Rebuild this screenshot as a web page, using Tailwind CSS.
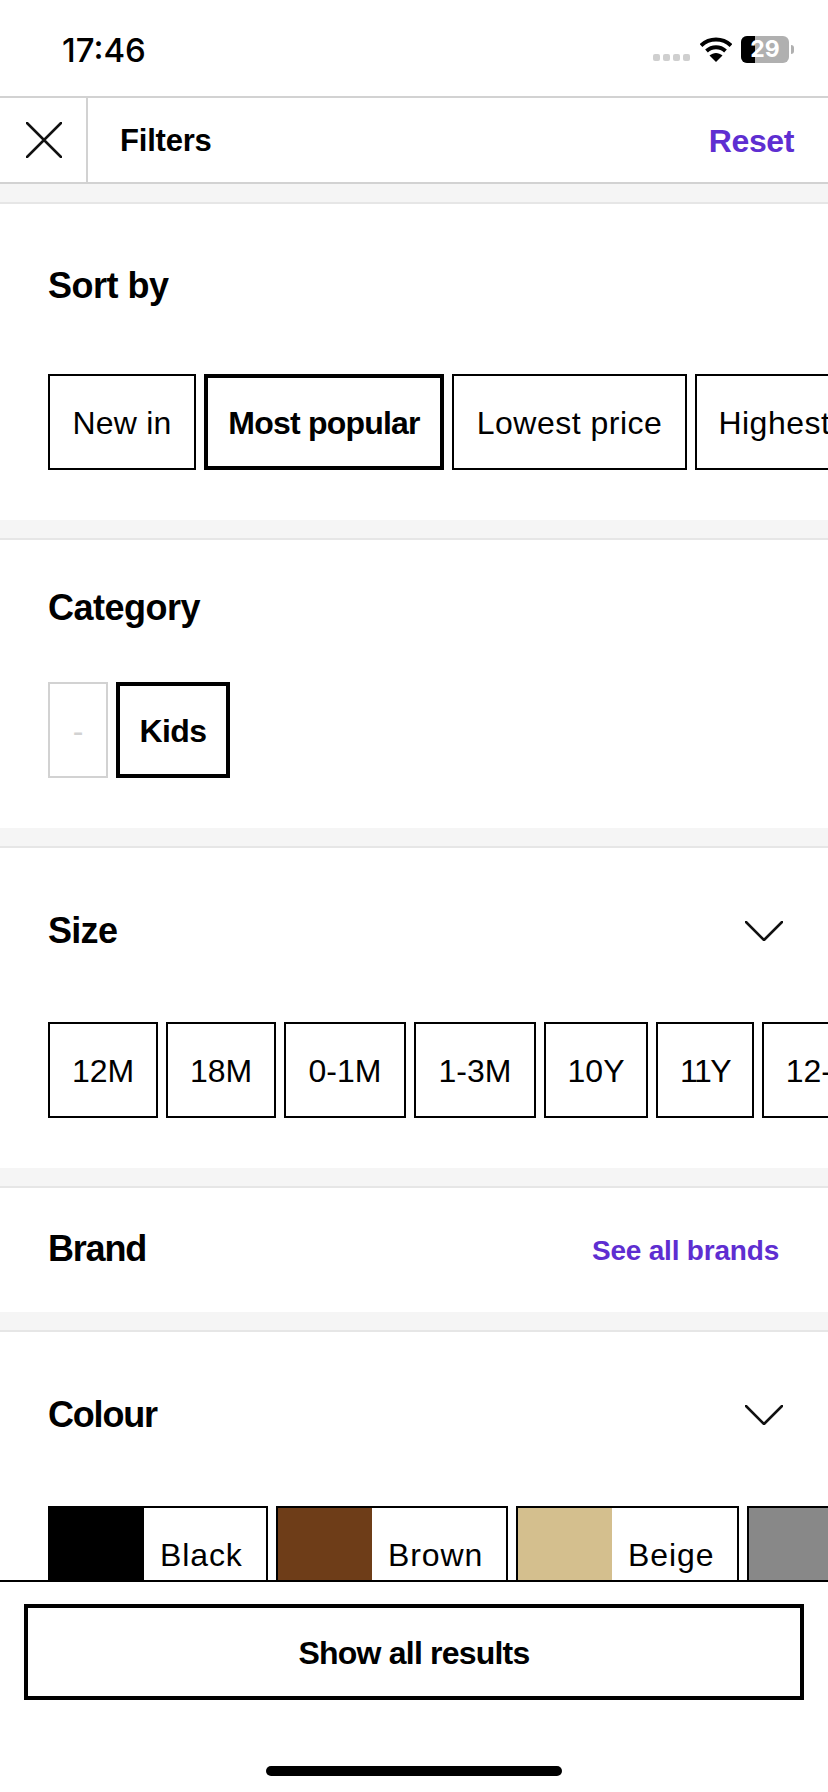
<!doctype html>
<html>
<head>
<meta charset="utf-8">
<script src="https://cdn.jsdelivr.net/npm/@tailwindcss/browser@4"></script>
</head>
<body class="bg-white">
<div class="w-[828px] h-[1792px] overflow-hidden flex flex-col font-['Liberation_Sans',sans-serif] text-black">
  <div class="h-[96px] shrink-0 flex items-start justify-between pl-[62px] pr-[34px]">
    <span class="mt-[30px] text-[33px] leading-[40px] font-medium font-['Inter',sans-serif]">17:46</span>
    <div class="flex items-start mt-[36px]">
      <div class="flex gap-[3px] mt-[18px]">
        <i class="block w-[7px] h-[7px] rounded-[2px] bg-[#cfcfcf]"></i>
        <i class="block w-[7px] h-[7px] rounded-[2px] bg-[#cfcfcf]"></i>
        <i class="block w-[7px] h-[7px] rounded-[2px] bg-[#cfcfcf]"></i>
        <i class="block w-[7px] h-[7px] rounded-[2px] bg-[#cfcfcf]"></i>
      </div>
      <svg class="ml-[10px] mt-[1px]" width="32" height="25" viewBox="0 0 32 25"><path d="M1 8.5C9.5 .5 22.5 .5 31 8.5" fill="none" stroke="#000" stroke-width="4"/><path d="M6.500 14C12 9 20 9 25.500 14" fill="none" stroke="#000" stroke-width="4"/><path d="M16 25l-6.500-6.500C13.500 15 18.500 15 22.500 18.500z" fill="#000"/></svg>
      <div class="ml-[9px] relative w-[48px] h-[27px] rounded-[6px] bg-[#b0b0b0] overflow-hidden flex items-center justify-center">
        <div class="absolute left-0 top-0 bottom-0 w-[14px] bg-black"></div>
        <span class="relative text-white font-bold text-[23px] leading-[27px] font-['Inter',sans-serif]">29</span>
      </div>
      <div class="mt-[9px] ml-[2px] w-[3px] h-[9px] rounded-r-[3px] bg-[#b0b0b0]"></div>
    </div>
  </div>

  <header class="h-[88px] shrink-0 flex items-stretch border-y-2 border-[#d2d2d2]">
    <div class="w-[88px] shrink-0 border-r-2 border-[#d2d2d2] flex items-center pl-[26px]">
      <svg width="36" height="36" viewBox="0 0 36 36"><path d="M1 1L35 35M35 1L1 35" stroke="#111" stroke-width="2.500" stroke-linecap="round"/></svg>
    </div>
    <div class="flex-1 flex items-center justify-between pl-[32px] pr-[34px]">
      <span class="text-[31px] font-bold tracking-[-0.2px] pt-[3px]">Filters</span>
      <span class="text-[32px] font-bold text-[#5e2ed1] tracking-[-0.4px] pt-[2px]">Reset</span>
    </div>
  </header>

  <main class="flex-1 min-h-0 overflow-hidden">
    <div class="h-[20px] bg-[#f5f5f5] border-b-2 border-[#e6e6e6]"></div>
    <section class="pt-[62px] pb-[50px]">
      <h2 class="pl-[48px] h-[40px] leading-[40px] text-[36px] font-bold tracking-[-0.5px]">Sort by</h2>
      <div class="mt-[68px] pl-[48px] flex gap-[8px] text-[32px]">
        <div class="shrink-0 w-[148px] h-[96px] pt-[2px] border-2 border-black flex items-center justify-center tracking-[0.2px]">New in</div>
        <div class="shrink-0 w-[240px] h-[96px] pt-[2px] border-4 border-black flex items-center justify-center font-bold tracking-[-0.8px]">Most popular</div>
        <div class="shrink-0 w-[235px] h-[96px] pt-[2px] border-2 border-black flex items-center justify-center tracking-[0.5px]">Lowest price</div>
        <div class="shrink-0 w-[240px] h-[96px] pt-[2px] border-2 border-black flex items-center justify-center tracking-[0.5px]">Highest price</div>
      </div>
    </section>

    <div class="h-[20px] bg-[#f5f5f5] border-b-2 border-[#e6e6e6]"></div>
    <section class="pt-[48px] pb-[50px]">
      <h2 class="pl-[48px] h-[40px] leading-[40px] text-[36px] font-bold tracking-[-0.5px]">Category</h2>
      <div class="mt-[54px] pl-[48px] flex gap-[8px] text-[32px]">
        <div class="shrink-0 w-[60px] h-[96px] pt-[2px] border-2 border-[#d2d2d2] text-[#d2d2d2] flex items-center justify-center">-</div>
        <div class="shrink-0 w-[114px] h-[96px] pt-[2px] border-4 border-black flex items-center justify-center font-bold tracking-[-0.6px]">Kids</div>
      </div>
    </section>

    <div class="h-[20px] bg-[#f5f5f5] border-b-2 border-[#e6e6e6]"></div>
    <section class="pt-[62px] pb-[50px]">
      <div class="pl-[48px] pr-[45px] h-[40px] flex items-center justify-between">
        <h2 class="text-[36px] font-bold tracking-[-0.7px] pt-[2px]">Size</h2>
        <svg class="mt-[2px]" width="38" height="20" viewBox="0 0 38 20"><path d="M1 1L19 19L37 1" fill="none" stroke="#111" stroke-width="2.500" stroke-linecap="round" stroke-linejoin="round"/></svg>
      </div>
      <div class="mt-[72px] pl-[48px] flex gap-[8px] text-[32px]">
        <div class="shrink-0 w-[110px] h-[96px] pt-[2px] border-2 border-black flex items-center justify-center">12M</div>
        <div class="shrink-0 w-[110px] h-[96px] pt-[2px] border-2 border-black flex items-center justify-center">18M</div>
        <div class="shrink-0 w-[122px] h-[96px] pt-[2px] border-2 border-black flex items-center justify-center">0-1M</div>
        <div class="shrink-0 w-[122px] h-[96px] pt-[2px] border-2 border-black flex items-center justify-center">1-3M</div>
        <div class="shrink-0 w-[104px] h-[96px] pt-[2px] border-2 border-black flex items-center justify-center">10Y</div>
        <div class="shrink-0 w-[98px] h-[96px] pt-[2px] border-2 border-black flex items-center justify-center tracking-[-1.5px]">11Y</div>
        <div class="shrink-0 w-[156px] h-[96px] pt-[2px] border-2 border-black flex items-center justify-center">12-18M</div>
      </div>
    </section>

    <div class="h-[20px] bg-[#f5f5f5] border-b-2 border-[#e6e6e6]"></div>
    <section class="h-[124px] pl-[48px] pr-[49px] flex items-center justify-between">
      <h2 class="text-[36px] font-bold tracking-[-1.2px] pb-[3px]">Brand</h2>
      <span class="text-[28px] font-bold text-[#5e2ed1] tracking-[-0.2px] pt-[2px]">See all brands</span>
    </section>

    <div class="h-[20px] bg-[#f5f5f5] border-b-2 border-[#e6e6e6]"></div>
    <section class="pt-[62px]">
      <div class="pl-[48px] pr-[45px] h-[40px] flex items-center justify-between">
        <h2 class="text-[36px] font-bold tracking-[-1.2px] pt-[2px]">Colour</h2>
        <svg class="mt-[2px]" width="38" height="20" viewBox="0 0 38 20"><path d="M1 1L19 19L37 1" fill="none" stroke="#111" stroke-width="2.500" stroke-linecap="round" stroke-linejoin="round"/></svg>
      </div>
      <div class="mt-[72px] pl-[48px] flex gap-[8px] text-[32px] tracking-[0.9px]">
        <div class="shrink-0 w-[220px] h-[96px] border-2 border-black flex"><div class="w-[94px] bg-black shrink-0"></div><div class="flex-1 flex items-center pl-[16px] pt-[2px]">Black</div></div>
        <div class="shrink-0 w-[232px] h-[96px] border-2 border-black flex"><div class="w-[94px] bg-[#6e3d18] shrink-0"></div><div class="flex-1 flex items-center pl-[16px] pt-[2px]">Brown</div></div>
        <div class="shrink-0 w-[223px] h-[96px] border-2 border-black flex"><div class="w-[94px] bg-[#d4bf8e] shrink-0"></div><div class="flex-1 flex items-center pl-[16px] pt-[2px]">Beige</div></div>
        <div class="shrink-0 w-[220px] h-[96px] border-2 border-black flex"><div class="w-[94px] bg-[#888888] shrink-0"></div><div class="flex-1 flex items-center pl-[16px] pt-[2px]">Grey</div></div>
      </div>
    </section>
  </main>

  <footer class="h-[212px] shrink-0 border-t-2 border-black bg-white flex flex-col items-center">
    <div class="mt-[22px] w-[780px] h-[96px] pt-[2px] border-4 border-black flex items-center justify-center text-[32px] font-bold tracking-[-0.8px]">Show all results</div>
    <div class="mt-[66px] w-[296px] h-[10px] rounded-full bg-black"></div>
  </footer>
</div>
</body>
</html>
